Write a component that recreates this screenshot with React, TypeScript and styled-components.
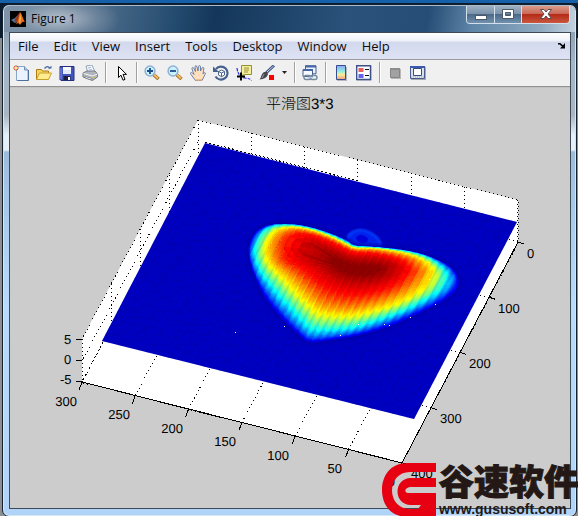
import React from "react";
import styled, { createGlobalStyle } from "styled-components";

const GlobalStyle = createGlobalStyle`
  * { box-sizing: border-box; }
  body { margin: 0; background: #7d858c; font-family: "Open Sans", "Noto Sans", sans-serif; }
  button { font: inherit; color: inherit; padding: 0; border: 0; background: none; cursor: default; }
`;

const Desktop = styled.div`
  position: relative;
  min-height: 100vh;
  display: flex;
  padding: 4px 1px 0 2px;
  overflow: hidden;
  background: linear-gradient(#1660aa 0 3px, #0a1c30 3px 38px, #8b8f93 38px 100%);
`;

const WindowFrame = styled.main`
  flex: 1;
  min-width: 0;
  display: flex;
  flex-direction: column;
  border: 1px solid #14202c;
  border-radius: 7px;
  padding: 0 5px 7px 6px;
  box-shadow: inset 0 0 0 1px #d5e6f5;
  background: linear-gradient(#8195a8 0, #a3b7c9 60px, #a9b5c2 110px, #e6f0fa 130px, #e6f0fa 145px, #9cbcdc 147px, #a4c6e8 190px, #b8dafc 300px, #b0d4f8 100%);
`;

const TitleBar = styled.header`
  height: 27px;
  margin: 0 -4px 0 -5px;
  padding-left: 6px;
  display: flex;
  align-items: flex-start;
  border-top: 1px solid #a9bccd;
  border-radius: 6px 6px 0 0;
  background:
    radial-gradient(ellipse 62px 24px at 54px 13px, #b4c0cc 0, #8c9cad88 60%, transparent 100%),
    linear-gradient(100deg, #7d93a8 0, #5c7894 12%, #244c70 30%, #14365a 37%, #2a527a 60%, #254d76 74%, #5f86a8 82%, #8faac0 94%, #c3d2df 100%);
`;

const TitleLabel = styled.h1`
  flex: 1;
  display: flex;
  align-items: center;
  gap: 5px;
  height: 25px;
  margin: 0;
  color: #05090e;
  font-size: 12px;
  font-weight: 400;
`;

const Captions = styled.div`
  display: flex;
  height: 18px;
  margin-right: 5px;
  border: 1px solid #d3e0eb;
  border-top: 0;
  border-radius: 0 0 4px 4px;
  overflow: hidden;
`;

const CaptionButton = styled.button<{ $w: number; $close?: boolean }>`
  width: ${(p) => p.$w}px;
  display: grid;
  place-items: center;
  border-right: ${(p) => (p.$close ? "0" : "1px solid #d3e0eb")};
  background: ${(p) =>
    p.$close
      ? "linear-gradient(#dc9a8a 0, #ca6a58 45%, #b52b17 50%, #c9573e 100%)"
      : "linear-gradient(#9fb1c3 0, #7c93ab 45%, #4b6a89 50%, #7191ad 100%)"};
`;

const Client = styled.div`
  flex: 1;
  display: flex;
  flex-direction: column;
  border: 1px solid #3d4b59;
  background: #ccc;
`;

const MenuBar = styled.nav`
  display: flex;
  align-items: center;
  gap: 15px;
  height: 27px;
  padding: 0 4px 0 8px;
  border-bottom: 1px solid #9a9a9f;
  background: linear-gradient(#fff 0, #eef1f8 8px, #d3d9ec 9px, #dde3f4 100%);
  font-size: 13px;
  color: #0c0c10;
`;

const MenuItem = styled.button`
  line-height: 20px;
`;

const DockButton = styled.button`
  margin-left: auto;
  display: grid;
`;

const ToolBar = styled.div`
  display: flex;
  align-items: center;
  height: 28px;
  padding-bottom: 3px;
  background: linear-gradient(#f0f0f0 0 26px, #929292 26px 27px, #c2c2c2 27px);
`;

const ToolButton = styled.button<{ $narrow?: boolean }>`
  width: ${(p) => (p.$narrow ? 12 : 23)}px;
  height: 24px;
  padding-left: 3px;
  flex: none;
  display: grid;
  align-items: center;
  justify-items: start;
`;

const Separator = styled.span`
  flex: none;
  width: 8px;
  height: 21px;
  background: linear-gradient(90deg, transparent 3px, #a0a0a0 3px 4px, #fff 4px 5px, transparent 5px);
`;

const Figure = styled.svg`
  display: block;
  width: 100%;
  height: auto;
  text-rendering: geometricPrecision;
`;

const AxisText = styled.text`
  font: 13px "Liberation Sans", Arial, sans-serif;
  fill: #000;
`;

const ChartTitle = styled.text`
  font: 300 15px "Liberation Sans", "Noto Sans CJK SC", sans-serif;
  fill: #000;
`;

const Watermark = styled.aside`
  position: absolute;
  right: -1px;
  bottom: 0;
  display: flex;
  gap: 3px;
  height: 54px;
  color: #231815;
`;

const BrandText = styled.div`
  display: flex;
  flex-direction: column;
  gap: 3px;
  white-space: nowrap;
`;

const BrandName = styled.strong`
  font: 900 35px/34px "Noto Sans CJK SC", sans-serif;
  -webkit-text-stroke: 1px #231815;
`;

const BrandLink = styled.a`
  font: 700 14px/18px "Liberation Sans", Arial, sans-serif;
  color: #231815;
  text-decoration: none;
`;

/* ---------- surface ---------- */

type Pt = [number, number];

// Level curves of the heart-shaped surface, in thirds of a pixel from (230, 205).
const CONTOURS: { v: number; p: Pt[] }[] = [
  { v: 0.07, p: [[55,150],[60,110],[82,75],[125,58],[190,57],[250,68],[310,88],[350,105],[375,120],[430,124],[500,131],[560,142],[610,158],[655,180],[680,205],[687,235],[672,265],[630,295],[560,330],[490,362],[400,389],[330,402],[242,413],[203,388],[158,345],[108,285],[73,215]] },
  { v: 0.22, p: [[62,150],[68,112],[90,78],[130,59],[190,58],[250,69],[310,89],[350,107],[375,121],[430,125],[500,132],[560,143],[610,160],[650,184],[671,210],[672,235],[650,262],[610,288],[545,321],[475,351],[395,377],[330,390],[245,397],[210,373],[167,330],[118,271],[80,208]] },
  { v: 0.38, p: [[75,150],[80,112],[100,80],[135,62],[190,60],[250,71],[310,92],[350,111],[375,123],[430,126],[500,134],[560,145],[605,163],[640,190],[650,213],[643,238],[620,263],[580,287],[520,318],[460,340],[390,363],[330,373],[250,374],[217,348],[178,306],[132,253],[92,200]] },
  { v: 0.62, p: [[105,150],[108,115],[122,90],[145,72],[192,66],[250,76],[308,97],[347,116],[375,128],[430,130],[498,138],[550,151],[588,168],[610,190],[612,210],[600,235],[575,258],[540,280],[490,302],[440,318],[385,331],[330,336],[265,327],[232,300],[197,265],[155,220],[117,180]] },
  { v: 0.74, p: [[133,150],[133,120],[143,98],[160,82],[195,73],[250,82],[306,102],[345,121],[375,133],[430,135],[490,144],[540,157],[568,175],[580,195],[576,210],[560,230],[535,250],[500,270],[460,286],[420,298],[385,306],[335,308],[280,296],[246,270],[215,238],[178,202],[144,175]] },
  { v: 0.86, p: [[165,150],[165,125],[172,105],[185,92],[205,84],[250,90],[304,109],[343,128],[375,140],[430,143],[480,152],[520,166],[538,182],[543,195],[536,208],[520,225],[498,240],[470,254],[440,264],[410,271],[380,274],[340,272],[295,258],[263,236],[233,209],[202,186],[174,170]] },
  { v: 0.93, p: [[220,148],[220,133],[227,122],[236,114],[248,111],[268,114],[302,127],[340,145],[375,155],[425,157],[460,163],[485,171],[500,182],[502,192],[496,203],[482,215],[463,224],[445,231],[425,236],[400,238],[375,238],[345,233],[315,221],[290,205],[267,188],[244,172],[228,160]] },
  { v: 0.99, p: [[300,168],[300,164],[303,162],[307,160],[313,160],[320,162],[335,168],[355,176],[378,180],[405,180],[425,181],[440,183],[450,187],[453,191],[450,196],[444,200],[435,204],[424,207],[410,209],[395,210],[380,209],[363,206],[345,200],[330,192],[318,184],[308,177],[302,172]] },
];

const STEPS = 16;

const smooth = (pts: Pt[]): Pt[] => {
  const n = pts.length;
  const out: Pt[] = [];
  for (let i = 0; i < n; i++) {
    const [a, b, c, d] = [pts[(i + n - 1) % n], pts[i], pts[(i + 1) % n], pts[(i + 2) % n]];
    for (let k = 0; k < STEPS; k++) {
      const t = k / STEPS;
      const f = (j: 0 | 1) =>
        0.5 * (2 * b[j] + (c[j] - a[j]) * t + (2 * a[j] - 5 * b[j] + 4 * c[j] - d[j]) * t * t + (3 * b[j] - a[j] - 3 * c[j] + d[j]) * t * t * t);
      out.push([230 + f(0) / 3, 205 + f(1) / 3]);
    }
  }
  return out;
};

const CURVES = CONTOURS.map((c) => ({ v: c.v, p: smooth(c.p) }));

const pointAt = (i: number, v: number): Pt => {
  let k = 0;
  while (k < CURVES.length - 2 && v > CURVES[k + 1].v) k++;
  const a = CURVES[k];
  const b = CURVES[k + 1];
  const t = Math.max(0, Math.min(1, (v - a.v) / (b.v - a.v)));
  return [a.p[i][0] + (b.p[i][0] - a.p[i][0]) * t, a.p[i][1] + (b.p[i][1] - a.p[i][1]) * t];
};

const ripple = ([x, y]: Pt) => {
  const s = (x + y * 0.53) / 8.2;
  return s - Math.floor(s) - 0.5;
};

const jet = (v: number) => {
  const ch = (c: number) => Math.round(255 * Math.max(0, Math.min(1, 1.5 - Math.abs(4 * v - c))));
  return `rgb(${ch(3)},${ch(2)},${ch(1)})`;
};

const LEVELS = Array.from({ length: 64 }, (_, k) => {
  const v = 0.07 + (k / 63) * 0.915;
  const amp = 0.065 * Math.min(1, (v - 0.07) * 4) * (v > 0.85 ? 0.5 : 1);
  const d = CURVES[0].p
    .map((_, i) => {
      const [x, y] = pointAt(i, v + amp * ripple(pointAt(i, v)));
      return `${x.toFixed(1)} ${y.toFixed(1)}`;
    })
    .join("L");
  return { d: `M${d}Z`, fill: jet(v) };
});

const RIDGES = Array.from({ length: 58 }, (_, i) => 325 + i * 8.2);
const SPECKS: Pt[] = [[235,332],[284,326],[340,335],[358,324],[384,324],[389,325],[410,317],[435,304],[429,279]];
const six = [0, 1, 2, 3, 4, 5, 6];
const five = [0, 1, 2, 3, 4];

const SurfacePlot = () => (
  <Figure viewBox="10 88 560 420" role="img" aria-label="平滑图3*3">
    <defs>
      <clipPath id="sheet"><path d="M205 143L517 222L414 419L102 341Z" /></clipPath>
      <clipPath id="heart"><path d={LEVELS[0].d} /></clipPath>
      <filter id="weave" x="0" y="0" width="100%" height="100%">
        <feTurbulence type="fractalNoise" baseFrequency="0.12 0.3" numOctaves="2" seed="4" />
        <feColorMatrix values="0 0 0 0 0  0 0 0 0 0  0 0 0 0 .4  0 3 0 0 -1.3" />
      </filter>
      <filter id="soft"><feGaussianBlur stdDeviation="1" /></filter>
    </defs>
    <path d="M198 120L518 200V242L402 463L82 382V339Z" fill="#fff" />
    <g fill="none" stroke="#000" strokeDasharray="1 3" shapeRendering="crispEdges">
      <path d="M198 120L518 200V242M198 120L82 339V382M198 142L82 361M198 163L82 382" />
      {six.map((k) => (
        <path key={k} d={`M${198 + k * 53.3} ${120 + k * 13.3}v42M${82 + k * 53.3} ${382 + k * 13.5}l116 -219`} />
      ))}
      {five.map((k) => (
        <path key={k} d={`M${198 - k * 29} ${120 + k * 54.7}v42M${518 - k * 29} ${242 + k * 55.2}l-320 -80`} />
      ))}
    </g>
    <g clipPath="url(#sheet)">
      <rect x="100" y="140" width="420" height="282" fill="#0000c0" />
      <g stroke="#0000d8" strokeWidth="2">
        {RIDGES.map((s) => <path key={s} d={`M${s - 74} 140l-150 283`} opacity=".3" />)}
      </g>
      <rect x="100" y="140" width="420" height="282" filter="url(#weave)" opacity=".5" />
      <path d="M348 243C343 232 355 229 362 230C373 231 381 238 382 247L373 250Z" fill="#0020ec" filter="url(#soft)" />
      <ellipse cx="362" cy="239" rx="6" ry="4" fill="#0000da" transform="rotate(15 362 239)" />
      <path d="M347 239q4 -9 15 -9q14 3 19 14" fill="none" stroke="#0044ff" strokeWidth="2" filter="url(#soft)" />
      <path d={LEVELS[0].d} fill="none" stroke="#0000a4" strokeWidth="5" filter="url(#soft)" opacity=".6" />
      <g shapeRendering="crispEdges">
        {LEVELS.map((l, i) => <path key={i} d={l.d} fill={l.fill} />)}
      </g>
      <g clipPath="url(#heart)" stroke="#500000" opacity=".08">
        {RIDGES.map((s) => <path key={s} d={`M${s - 74} 140l-150 283`} strokeWidth="2" />)}
      </g>
    </g>
    <g fill="#fff">{SPECKS.map(([x, y]) => <rect key={x} x={x} y={y} width="1" height="1" />)}</g>
    <path d="M205 142L358 181" fill="none" stroke="#000" strokeDasharray="2 2" shapeRendering="crispEdges" />
    <g fill="none" stroke="#000" shapeRendering="crispEdges">
      <path d="M82 382L402 463L518 242" />
      <path d="M76 339.500h6M76 360.500h6M76 381.500h6" />
      {six.map((k) => <path key={k} d={`M${82 + k * 53.3} ${382 + k * 13.5}l-3 8`} />)}
      {five.map((k) => <path key={k} d={`M${518 - k * 29} ${242 + k * 55.2}l6 2`} />)}
    </g>
    <ChartTitle x="266" y="109">平滑图3*3</ChartTitle>
    <AxisText x="64" y="344">5</AxisText>
    <AxisText x="64" y="364">0</AxisText>
    <AxisText x="60" y="384">-5</AxisText>
    {[300, 250, 200, 150, 100, 50, 0].map((n, k) => (
      <AxisText key={n} x={77 + k * 53} y={406 + Math.round(k * 13.4)} textAnchor="end">{n}</AxisText>
    ))}
    {[0, 100, 200, 300, 400].map((n, k) => (
      <AxisText key={n} x={527 - k * 29} y={258 + k * 55}>{n}</AxisText>
    ))}
  </Figure>
);

/* ---------- icons ---------- */

const Glyph = ({ children }: { children: React.ReactNode }) => (
  <svg width="16" height="16" viewBox="0 0 16 16" fill="none" aria-hidden="true">{children}</svg>
);

const Lens = ({ plus }: { plus?: boolean }) => (
  <Glyph>
    <path d="M9.500 9.500l5 4.500" stroke="#9c671a" strokeWidth="3.500" />
    <path d="M9.500 9l4.500 4.500" stroke="#f2bd60" strokeWidth="2" />
    <circle cx="6" cy="6" r="4.900" fill="#c9f3fb" stroke="#8fb0d6" strokeWidth="1.500" />
    <path d={plus ? "M3 6h6M6 3v6" : "M3 6h6"} stroke="#1c4a8c" strokeWidth="1.800" />
  </Glyph>
);

type Tool = { label: string; icon: React.ReactNode; narrow?: boolean } | null;

const TOOLS: Tool[] = [
  { label: "New Figure", icon: <Glyph><path d="M3.500 1.500h8l3.500 3.500v10.500h-11.500z" fill="#eaf3ff" stroke="#8aa5c8" /><path d="M15.500 5v10.500h-11" stroke="#4f709d" /><path d="M11.500 1.500v3.500h3.500" fill="#b9cee8" stroke="#7190b8" /><path d="M3 0v6M0 3h6M1 1l4 4M5 1l-4 4" stroke="#e2542e" strokeWidth="1" /><circle cx="3" cy="3" r="1.300" fill="#fff09c" /></Glyph> },
  { label: "Open File", icon: <Glyph><path d="M.5 14.500v-10h5l1 1.500h6v8z" fill="#f5d35d" stroke="#ae7d12" /><path d="M.5 14.500l3-6.500h12l-3 6.500z" fill="#ffec91" stroke="#c9a02c" /><path d="M8.500 3.500c2-2.500 4-2.500 5.500 0" stroke="#496b9e" strokeWidth="1.300" /><path d="M12 3.500h3.500V.8z" fill="#496b9e" /></Glyph> },
  { label: "Save Figure", icon: <Glyph><path d="M1 1.500h14v14h-13l-1-1z" fill="#4355ba" stroke="#24307c" /><path d="M4 2h8v7h-8z" fill="#dfeaff" /><path d="M4 2h8v3h-8z" fill="#f9fcff" /><path d="M4.500 11h7v4h-7z" fill="#191e40" /><path d="M9 12h2v3h-2z" fill="#fff" /><path d="M2 3v11" stroke="#8291ec" /></Glyph> },
  { label: "Print Figure", icon: <Glyph><path d="M4 1l6-1 3 7-7 1z" fill="#f6f9ff" stroke="#95a4b6" /><path d="M1 8l4-2h8l2.500 3v3l-5 3.500L1 12z" fill="#b0b6bc" stroke="#737b85" /><path d="M1.500 8.500l9 2.500 5-2" stroke="#f5f5f5" /><path d="M3 11.500l7 2v1.500l-7-2z" fill="#fff" stroke="#71777f" strokeWidth=".7" /><path d="M6 3l3-.5M7 5l3-.5" stroke="#a4b8ce" /><path d="M11.500 12.500h2" stroke="#ddb832" /></Glyph> },
  null,
  { label: "Edit Plot", icon: <Glyph><path d="M5.500 1.500v11l2.500-2.300 2 5 2-.8-2-5h3.500z" fill="#fff" stroke="#000" /></Glyph> },
  null,
  { label: "Zoom In", icon: <Lens plus /> },
  { label: "Zoom Out", icon: <Lens /> },
  { label: "Pan", icon: <Glyph><path d="M5.500 15.500L1 9.500c-1.500-2 .5-2.500 1.500-1.500l1.500 1.500L2 4c-.5-1.800 1.300-2 2-.5l1.500 3L5 2c0-1.800 1.800-1.800 2 0l1 4 .5-4.500c.3-1.500 2-1.200 2 .2V6l1.500-3c.8-1.200 2.200-.5 1.800 1L13 9c2-2.500 3-1 2 .5l-3 6z" fill="#ffdfbd" stroke="#5b77a8" strokeWidth=".9" /><path d="M6 15h6" stroke="#e8ae79" strokeWidth="1.500" /></Glyph> },
  { label: "Rotate 3D", icon: <Glyph><path d="M3 4a6.500 6.500 0 1 1-.5 7.500" stroke="#46618d" strokeWidth="2.200" /><path d="M0 1.500v5.500h6z" fill="#46618d" /><path d="M5.500 6.500l3-1.500 3 1.500v3.500l-3 1.700-3-1.700zM5.500 6.500l3 1.500 3-1.500M8.500 8v3.500" fill="#fff" stroke="#4c648b" /></Glyph> },
  { label: "Data Cursor", icon: <Glyph><path d="M1 3q1 9 8 10t6 2.500" stroke="#2424e8" strokeWidth="1.200" strokeDasharray="3 1" /><path d="M5.500.5h10v9h-7l-3 1z" fill="#f5ee9d" stroke="#929033" /><path d="M8 3h5M8 5h5M8 7h4" stroke="#99943c" /><path d="M1 11.500h8M5 7.500v8" stroke="#000" strokeWidth="2" /></Glyph> },
  { label: "Brush", icon: <Glyph><path d="M15 .5L7 8" stroke="#435b85" strokeWidth="3" /><path d="M14.500 1L8 7" stroke="#b7cdf0" /><path d="M8 7l1 2c-1 4-4 5-8.500 5.500C2.500 13 2 8 5.500 7z" fill="#444750" /><path d="M5 9l-2 4" stroke="#999" /><rect x="10" y="10" width="5" height="5" fill="#f00" /></Glyph> },
  { label: "Brush options", narrow: true, icon: <svg width="5" height="3" viewBox="0 0 5 3" aria-hidden="true"><path d="M0 0h5L2.500 3z" fill="#222" /></svg> },
  null,
  { label: "Link Plot", icon: <Glyph><path d="M3.500.8h10.500v8H3.500z" fill="#e8f1ff" stroke="#485f8c" /><path d="M3 1.500h11" stroke="#4565a6" strokeWidth="2" /><path d="M1 4.500h9.500v7H1z" fill="#f5f9ff" stroke="#485f8c" /><path d="M1 5h10" stroke="#4565a6" strokeWidth="2" /><rect x="2" y="10.500" width="7" height="4" rx="2" stroke="#758ba2" strokeWidth="1.400" /><rect x="8" y="10.500" width="7" height="4" rx="2" stroke="#758ba2" strokeWidth="1.400" /><path d="M6 12.500h5" stroke="#bbcad8" strokeWidth="1.400" /></Glyph> },
  null,
  { label: "Insert Colorbar", icon: <Glyph><defs><linearGradient id="bar" x2="0" y2="1"><stop stopColor="#92a5f0" /><stop offset=".4" stopColor="#8ceae5" /><stop offset=".65" stopColor="#f7ef98" /><stop offset="1" stopColor="#f19b7d" /></linearGradient></defs><path d="M4 2h10v14H4z" fill="#b5b8c1" /><path d="M3.500.5h9v14h-9z" fill="url(#bar)" stroke="#354e91" /></Glyph> },
  { label: "Insert Legend", icon: <Glyph><path d="M1 1h14.500v14.500H1z" fill="#aab0bd" /><path d="M.7.7h13.800v13.800H.7z" fill="#fafcff" stroke="#3c5186" strokeWidth="1.400" /><path d="M2.500 3h5v4h-5z" fill="#e4605c" /><path d="M2.500 9h5v4h-5z" fill="#6662e4" /><path d="M9 4.500h4M9 10.500h4" stroke="#111" /></Glyph> },
  null,
  { label: "Hide Plot Tools", icon: <Glyph><path d="M4 4h10v10H4z" fill="#b8b8b8" /><path d="M3.500 3.500h9v9h-9z" fill="#a2a2a2" stroke="#858585" /><path d="M3 4h10" stroke="#8d8d8d" strokeWidth="2" /></Glyph> },
  { label: "Show Plot Tools", icon: <Glyph><path d="M1 2h15v13H1z" fill="#a4a9b3" /><path d="M.5 1.500h14v12H.5z" fill="#dce1e8" stroke="#49608f" /><path d="M0 2h15" stroke="#3c59ab" strokeWidth="2" /><path d="M3.500 3.500h8v7h-8z" fill="#fff" stroke="#354e87" /><path d="M1 12h13" stroke="#9ea8b7" strokeDasharray="1 1" /></Glyph> },
];

const MatlabIcon = () => (
  <svg width="16" height="16" viewBox="0 0 16 16" aria-hidden="true">
    <rect width="16" height="16" fill="#000" />
    <path d="M1 9l4-2 2-2 2 1-2 5-2 1z" fill="#457ca9" />
    <path d="M7 5l3-4-2 9-2 1-2-1z" fill="#983818" />
    <path d="M10 1c2 2 3 7 5 10-2-1-3 0-5 3-1-2-2-2-4-1 2-3 3-8 4-12z" fill="#e66c1c" />
    <path d="M10 2l1 6-1 5-1-2z" fill="#f9b749" />
  </svg>
);

export default function App() {
  return (
    <>
      <GlobalStyle />
      <Desktop>
        <WindowFrame>
          <TitleBar>
            <TitleLabel><MatlabIcon />Figure 1</TitleLabel>
            <Captions>
              <CaptionButton $w={28} aria-label="Minimize">
                <svg width="12" height="12" viewBox="0 0 12 12"><rect x=".5" y="6.500" width="11" height="4" fill="#fff" stroke="#4d5967" /></svg>
              </CaptionButton>
              <CaptionButton $w={27} aria-label="Maximize">
                <svg width="12" height="11" viewBox="0 0 12 11"><path fillRule="evenodd" d="M.5 .5h11v9H.5zM3.500 3.500v3h5v-3z" fill="#fff" stroke="#4d5967" /></svg>
              </CaptionButton>
              <CaptionButton $w={47} $close aria-label="Close">
                <svg width="12" height="11" viewBox="0 0 12 11"><path d="M.5 .5h3.500l2 2.500 2-2.500h3.500l-3.500 4.500 3.500 4.500H8L6 7 4 9.500H.5L4 5z" fill="#fff" stroke="#5c4b50" /></svg>
              </CaptionButton>
            </Captions>
          </TitleBar>
          <Client>
            <MenuBar>
              {["File", "Edit", "View", "Insert", "Tools", "Desktop", "Window", "Help"].map((m) => (
                <MenuItem key={m}>{m}</MenuItem>
              ))}
              <DockButton aria-label="Dock Figure">
                <svg width="8" height="6" viewBox="0 0 8 6"><path d="M0 .8h2l3 2.500" stroke="#000" strokeWidth="1.500" fill="none" /><path d="M7 0v5.500H2z" fill="#000" /></svg>
              </DockButton>
            </MenuBar>
            <ToolBar role="toolbar" aria-label="Figure toolbar">
              {TOOLS.map((t, i) =>
                t ? <ToolButton key={i} $narrow={t.narrow} aria-label={t.label}>{t.icon}</ToolButton> : <Separator key={i} />
              )}
            </ToolBar>
            <SurfacePlot />
          </Client>
        </WindowFrame>
        <Watermark>
          <svg width="55" height="54" viewBox="0 0 55 54" aria-hidden="true">
            <path
              fillRule="evenodd"
              fill="#e60012"
              d="M55 0H27C9 0 1 13 1 27s8 27 26 27h28zM55 9H29C5 9 5 46 29 46h8l3-4H30C12 42 12 15 30 15h25zM55 24H31c-8 0-8 6-4 6h28z"
            />
          </svg>
          <BrandText>
            <BrandName>谷速软件</BrandName>
            <BrandLink href="http://www.gususoft.com">www.gususoft.com</BrandLink>
          </BrandText>
        </Watermark>
      </Desktop>
    </>
  );
}
